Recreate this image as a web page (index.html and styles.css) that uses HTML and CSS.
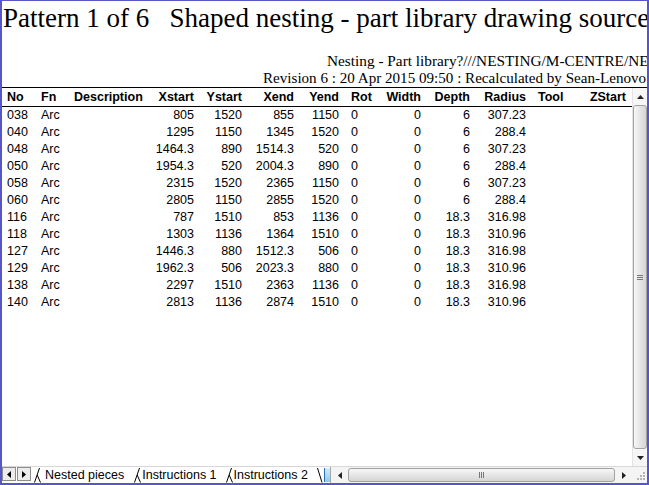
FILE: index.html
```html
<!DOCTYPE html>
<html>
<head>
<meta charset="utf-8">
<title>Shaped nesting - part library drawing source</title>
<link rel="stylesheet" href="styles.css">
</head>
<body>
<div class="window">
  <div class="top">
    <div class="title">Pattern 1 of 6   Shaped nesting - part library drawing source</div>
    <div class="sub sub1">Nesting - Part library?///NESTING/M-CENTRE/NE</div>
    <div class="sub sub2">Revision 6 : 20 Apr 2015 09:50 : Recalculated by Sean-Lenovo</div>
  </div>
  <div class="main">
    <div class="grid">
      <div class="row head">
        <span class="l">No</span><span class="l">Fn</span><span class="l">Description</span><span class="r">Xstart</span><span class="r">Ystart</span><span class="r">Xend</span><span class="r r8">Yend</span><span class="l">Rot</span><span class="r">Width</span><span class="r">Depth</span><span class="r r8">Radius</span><span class="l">Tool</span><span class="r">ZStart</span>
      </div>
      <div class="row"><span class="l">038</span><span class="l">Arc</span><span class="l"></span><span class="r">805</span><span class="r">1520</span><span class="r">855</span><span class="r r8">1150</span><span class="l">0</span><span class="r">0</span><span class="r">6</span><span class="r r8">307.23</span><span class="l"></span><span class="r"></span></div>
      <div class="row"><span class="l">040</span><span class="l">Arc</span><span class="l"></span><span class="r">1295</span><span class="r">1150</span><span class="r">1345</span><span class="r r8">1520</span><span class="l">0</span><span class="r">0</span><span class="r">6</span><span class="r r8">288.4</span><span class="l"></span><span class="r"></span></div>
      <div class="row"><span class="l">048</span><span class="l">Arc</span><span class="l"></span><span class="r">1464.3</span><span class="r">890</span><span class="r">1514.3</span><span class="r r8">520</span><span class="l">0</span><span class="r">0</span><span class="r">6</span><span class="r r8">307.23</span><span class="l"></span><span class="r"></span></div>
      <div class="row"><span class="l">050</span><span class="l">Arc</span><span class="l"></span><span class="r">1954.3</span><span class="r">520</span><span class="r">2004.3</span><span class="r r8">890</span><span class="l">0</span><span class="r">0</span><span class="r">6</span><span class="r r8">288.4</span><span class="l"></span><span class="r"></span></div>
      <div class="row"><span class="l">058</span><span class="l">Arc</span><span class="l"></span><span class="r">2315</span><span class="r">1520</span><span class="r">2365</span><span class="r r8">1150</span><span class="l">0</span><span class="r">0</span><span class="r">6</span><span class="r r8">307.23</span><span class="l"></span><span class="r"></span></div>
      <div class="row"><span class="l">060</span><span class="l">Arc</span><span class="l"></span><span class="r">2805</span><span class="r">1150</span><span class="r">2855</span><span class="r r8">1520</span><span class="l">0</span><span class="r">0</span><span class="r">6</span><span class="r r8">288.4</span><span class="l"></span><span class="r"></span></div>
      <div class="row"><span class="l">116</span><span class="l">Arc</span><span class="l"></span><span class="r">787</span><span class="r">1510</span><span class="r">853</span><span class="r r8">1136</span><span class="l">0</span><span class="r">0</span><span class="r">18.3</span><span class="r r8">316.98</span><span class="l"></span><span class="r"></span></div>
      <div class="row"><span class="l">118</span><span class="l">Arc</span><span class="l"></span><span class="r">1303</span><span class="r">1136</span><span class="r">1364</span><span class="r r8">1510</span><span class="l">0</span><span class="r">0</span><span class="r">18.3</span><span class="r r8">310.96</span><span class="l"></span><span class="r"></span></div>
      <div class="row"><span class="l">127</span><span class="l">Arc</span><span class="l"></span><span class="r">1446.3</span><span class="r">880</span><span class="r">1512.3</span><span class="r r8">506</span><span class="l">0</span><span class="r">0</span><span class="r">18.3</span><span class="r r8">316.98</span><span class="l"></span><span class="r"></span></div>
      <div class="row"><span class="l">129</span><span class="l">Arc</span><span class="l"></span><span class="r">1962.3</span><span class="r">506</span><span class="r">2023.3</span><span class="r r8">880</span><span class="l">0</span><span class="r">0</span><span class="r">18.3</span><span class="r r8">310.96</span><span class="l"></span><span class="r"></span></div>
      <div class="row"><span class="l">138</span><span class="l">Arc</span><span class="l"></span><span class="r">2297</span><span class="r">1510</span><span class="r">2363</span><span class="r r8">1136</span><span class="l">0</span><span class="r">0</span><span class="r">18.3</span><span class="r r8">316.98</span><span class="l"></span><span class="r"></span></div>
      <div class="row"><span class="l">140</span><span class="l">Arc</span><span class="l"></span><span class="r">2813</span><span class="r">1136</span><span class="r">2874</span><span class="r r8">1510</span><span class="l">0</span><span class="r">0</span><span class="r">18.3</span><span class="r r8">310.96</span><span class="l"></span><span class="r"></span></div>
    </div>
    <div class="vscroll">
      <div class="vbtn"><svg width="7" height="4" viewBox="0 0 7 4"><path d="M3.5 0 L7 4 L0 4 Z" fill="#222"/></svg></div>
      <div class="vthumb"><span class="vgrip"></span></div>
      <div class="vbtn"><svg width="7" height="4" viewBox="0 0 7 4"><path d="M0 0 L7 0 L3.5 4 Z" fill="#222"/></svg></div>
    </div>
  </div>
  <div class="bottombar">
    <div class="navbtn"><svg width="4" height="7" viewBox="0 0 4 7"><path d="M4 0 L4 7 L0 3.5 Z" fill="#000"/></svg></div>
    <div class="navbtn"><svg width="4" height="7" viewBox="0 0 4 7"><path d="M0 0 L4 3.5 L0 7 Z" fill="#000"/></svg></div>
    <div class="tabs">
      <svg class="sep sep-first" width="9" height="16" viewBox="0 0 9 16"><path d="M1.5 15.5 L6.5 1 M4.2 8 L7.5 15.5" stroke="#000" stroke-width="1" fill="none"/></svg>
      <span class="tab tab-first">Nested pieces</span>
      <svg class="sep" width="9" height="16" viewBox="0 0 9 16"><path d="M1.5 15.5 L6.5 1 M4.2 8 L7.5 15.5" stroke="#000" stroke-width="1" fill="none"/></svg>
      <span class="tab">Instructions 1</span>
      <svg class="sep" width="9" height="16" viewBox="0 0 9 16"><path d="M1.5 15.5 L6.5 1 M4.2 8 L7.5 15.5" stroke="#000" stroke-width="1" fill="none"/></svg>
      <span class="tab">Instructions 2</span>
      <svg class="sep-end" width="8" height="16" viewBox="0 0 8 16"><path d="M1.5 1 L6 15.5" stroke="#000" stroke-width="1" fill="none"/></svg>
      <span class="activetab"></span>
      <span class="splitbar"></span>
    </div>
    <div class="hscroll">
      <div class="hbtn"><svg width="4" height="7" viewBox="0 0 4 7"><path d="M4 0 L4 7 L0 3.5 Z" fill="#222"/></svg></div>
      <div class="hthumb"><span class="hgrip"></span></div>
      <div class="hbtn"><svg width="4" height="7" viewBox="0 0 4 7"><path d="M0 0 L4 3.5 L0 7 Z" fill="#222"/></svg></div>
    </div>
    <div class="corner"><svg width="15" height="16" viewBox="0 0 15 16"><g fill="#b4b4b4"><rect x="11" y="5" width="2" height="2"/><rect x="8" y="8" width="2" height="2"/><rect x="11" y="8" width="2" height="2"/><rect x="5" y="11" width="2" height="2"/><rect x="8" y="11" width="2" height="2"/><rect x="11" y="11" width="2" height="2"/></g></svg></div>
  </div>
</div>
</body>
</html>
```

FILE: styles.css
```css
html, body {
  margin: 0;
  padding: 0;
  background: #fff;
}

.window {
  width: 649px;
  height: 485px;
  box-sizing: border-box;
  border: 2px solid #5656c8;
  border-top-width: 1px;
  display: flex;
  flex-direction: column;
  background: #fff;
  overflow: hidden;
  color: #000;
}

.top {
  flex: none;
}

.title {
  font: 27px/30px "Liberation Serif", "Times New Roman", serif;
  white-space: pre;
  overflow: hidden;
  padding: 2px 0 0 1px;
}

.sub {
  font-family: "Liberation Serif", "Times New Roman", serif;
  white-space: nowrap;
  overflow: hidden;
}

.sub1 {
  font-size: 15.3px;
  margin-top: 19px;
  line-height: 18px;
  padding-left: 325px;
}

.sub2 {
  font-size: 15.1px;
  line-height: 17px;
  padding-left: 261px;
  border-bottom: 1px solid #000;
}

.main {
  flex: 1;
  min-height: 0;
  display: flex;
}

.grid {
  flex: 1;
  font-family: "Liberation Sans", Arial, sans-serif;
  font-size: 12.5px;
}

.row {
  display: grid;
  grid-template-columns: 34px 33px 76px 52px 48px 52px 49px 33px 45px 49px 60px 46px 50px;
  height: 17px;
  line-height: 17px;
  padding-left: 1px;
  white-space: nowrap;
}

.row.head {
  font-weight: bold;
  padding-top: 1px;
  border-bottom: 1px solid #000;
}

.l {
  text-align: left;
  padding-left: 4px;
}

.r {
  text-align: right;
  padding-right: 4px;
}

.r.r8 {
  padding-right: 8px;
}

.vscroll {
  width: 15px;
  flex: none;
  box-sizing: border-box;
  display: flex;
  flex-direction: column;
  background: #f6f6f6;
  border-left: 1px solid #e4e4e4;
}

.vbtn {
  height: 17px;
  flex: none;
  display: flex;
  align-items: center;
  justify-content: center;
}

.vthumb {
  flex: 1;
  box-sizing: border-box;
  border: 1px solid #a2a2a2;
  border-radius: 3px;
  background: linear-gradient(to right, #f7f7f7, #e2e2e2 60%, #d6d6d6);
  display: flex;
  align-items: center;
  justify-content: center;
}

.vgrip {
  width: 6px;
  height: 5px;
  border-top: 1px solid #777;
  border-bottom: 1px solid #777;
  box-sizing: border-box;
  background: linear-gradient(#777, #777) center / 6px 1px no-repeat;
}

.bottombar {
  flex: none;
  height: 17px;
  box-sizing: border-box;
  border-top: 1px solid #d8d8d8;
  display: flex;
  align-items: stretch;
  background: #fff;
}

.navbtn {
  width: 14px;
  height: 14px;
  box-sizing: border-box;
  border: 1px solid #8c8c8c;
  background: #ececec;
  margin-right: 1px;
  display: flex;
  align-items: center;
  justify-content: center;
  flex: none;
}

.tabs {
  display: flex;
  align-items: stretch;
  width: 298px;
  flex: none;
  font-family: "Liberation Sans", Arial, sans-serif;
  font-size: 12.5px;
  line-height: 16px;
  white-space: nowrap;
}

.sep {
  flex: none;
  display: block;
}

.sep-first {
  margin-left: 1px;
}

.tab {
  padding-right: 8px;
}

.tab-first {
  padding-left: 3px;
  padding-right: 9px;
}

.sep-end {
  flex: none;
  display: block;
}

.activetab {
  width: 7px;
  margin-top: 1px;
  height: 14px;
  border-left: 1px solid #2d6fb4;
  background: linear-gradient(#d4ecfc, #8cc8f2);
  flex: none;
}

.splitbar {
  width: 2px;
  margin: 1px 0 0 1px;
  height: 14px;
  background: #111;
  flex: none;
}

.hscroll {
  flex: 1;
  display: flex;
  align-items: center;
  background: #f4f4f4;
  border-left: 1px solid #a8a8a8;
}

.hbtn {
  width: 17px;
  height: 16px;
  flex: none;
  display: flex;
  align-items: center;
  justify-content: center;
}

.hthumb {
  flex: 1;
  height: 14px;
  box-sizing: border-box;
  border: 1px solid #a2a2a2;
  border-radius: 3px;
  background: linear-gradient(#f7f7f7, #e4e4e4 55%, #d6d6d6);
  display: flex;
  align-items: center;
  justify-content: center;
}

.hgrip {
  width: 5px;
  height: 6px;
  box-sizing: border-box;
  border-left: 1px solid #777;
  border-right: 1px solid #777;
  background: linear-gradient(#777, #777) center / 1px 6px no-repeat;
}

.corner {
  width: 15px;
  flex: none;
  background: #f4f4f4;
}

.corner svg {
  display: block;
}
```
